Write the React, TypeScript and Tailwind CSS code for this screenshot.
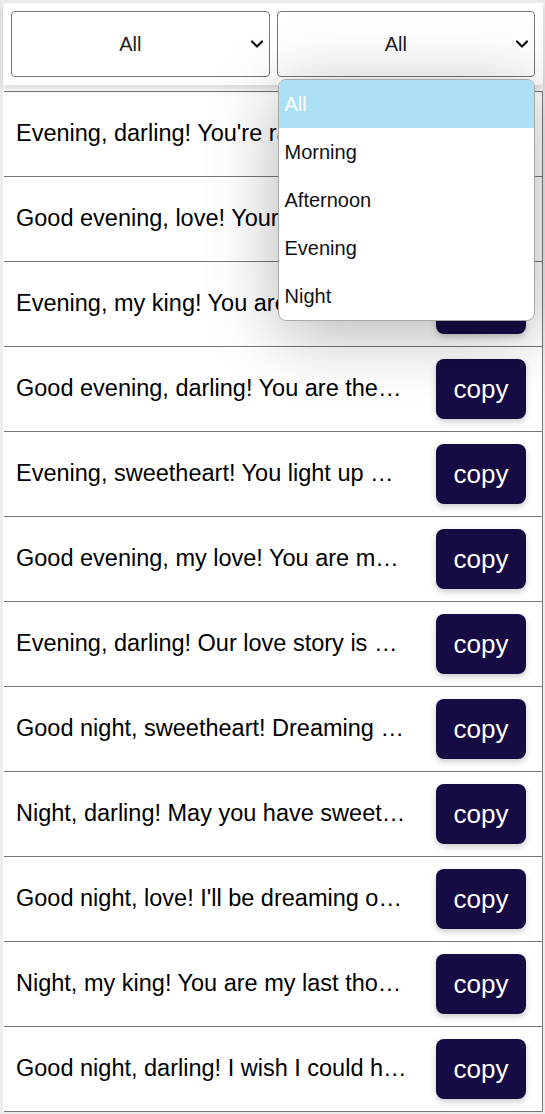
import { useState } from 'react';

const messages = [
  "Evening, darling! You're radiant tonight, as always.",
  'Good evening, love! Your smile makes everything better.',
  'Evening, my king! You are the reason I smile tonight.',
  'Good evening, darling! You are the light of my life.',
  'Evening, sweetheart! You light up my whole world.',
  'Good evening, my love! You are my everything.',
  'Evening, darling! Our love story is my favourite.',
  'Good night, sweetheart! Dreaming of you tonight.',
  'Night, darling! May you have sweet dreams of us.',
  "Good night, love! I'll be dreaming of you all night.",
  'Night, my king! You are my last thought tonight.',
  'Good night, darling! I wish I could hold you tonight.',
];

const periods = ['All', 'Morning', 'Afternoon', 'Evening', 'Night'];

function Chevron() {
  return (
    <svg className="pointer-events-none absolute right-[6px] top-1/2 -translate-y-1/2" width="14" height="10" viewBox="0 0 14 10" fill="none">
      <path d="M2 2.5l5 5 5-5" stroke="#111" strokeWidth="2.2" strokeLinecap="round" strokeLinejoin="round" />
    </svg>
  );
}

function Picker({ value, onChange, options }: { value: string; onChange: (v: string) => void; options: string[] }) {
  return (
    <div className="relative flex-1">
      <select
        value={value}
        onChange={(e) => onChange(e.target.value)}
        className="h-[66px] w-full appearance-none rounded-[4px] border border-[#767676] bg-white pr-[20px] text-center text-[20px] text-[#222] outline-none"
      >
        {options.map((o) => (
          <option key={o}>{o}</option>
        ))}
      </select>
      <Chevron />
    </div>
  );
}

export default function App() {
  const [kind, setKind] = useState('All');
  const [period, setPeriod] = useState('All');

  return (
    <div className="min-h-[1114px] border-[3px] border-r-[2px] border-[#ececec] bg-white font-['Liberation_Sans',Arial,sans-serif]">
      <div className="relative z-10 flex gap-[7px] bg-white px-[8px] pb-[8px] pt-[8px] shadow-[0_4px_8px_rgba(0,0,0,0.16)]">
        <Picker value={kind} onChange={setKind} options={['All', 'Love', 'Friends', 'Family']} />
        <div className="relative flex-1">
          <Picker value={period} onChange={setPeriod} options={periods} />
          {/* open dropdown list */}
          <div className="absolute left-[1px] right-0 top-[68px] z-20 overflow-hidden rounded-[8px] border border-[#a9a9a9] bg-white shadow-[0_12px_70px_rgba(0,0,0,0.3)]">
            {periods.map((p, i) => (
              <div
                key={p}
                className={
                  i === 0
                    ? 'flex h-[48px] items-center bg-[#ace0f4] px-[6px] text-[20px] text-white'
                    : 'flex h-[48px] items-center px-[6px] text-[20px] text-[#111]'
                }
              >
                {p}
              </div>
            ))}
          </div>
        </div>
      </div>

      <div className="ml-[1px] mt-[6px] border-r border-t border-[#777]">
        {messages.map((m) => (
          <div key={m} className="flex h-[85px] items-center gap-[29px] border-b border-[#777] pl-[12px] pr-[16px]">
            <p className="min-w-0 flex-1 truncate text-[23.5px] text-black">{m}</p>
            <button className="h-[60px] w-[90px] shrink-0 rounded-[8px] bg-[#170b44] text-[26px] text-white shadow-[0_3px_6px_rgba(0,0,0,0.2)]">
              copy
            </button>
          </div>
        ))}
      </div>
    </div>
  );
}
